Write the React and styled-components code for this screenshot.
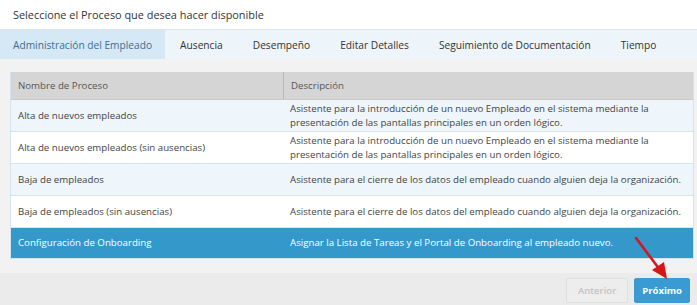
import React, { useState } from "react";
import styled, { createGlobalStyle } from "styled-components";

const GlobalStyle = createGlobalStyle`
  html, body { margin: 0; padding: 0; background: #fff; }
  body { font-family: "Open Sans", "Liberation Sans", sans-serif; color: #333; }
`;

const Page = styled.div`
  width: 697px;
  height: 305px;
  display: flex;
  flex-direction: column;
  position: relative;
  overflow: hidden;
`;

const Title = styled.div`
  height: 30px;
  padding-left: 13px;
  display: flex;
  align-items: center;
  font-size: 10.9px;
  color: #333;
  border-bottom: 1px solid #dde3e8;
`;

const Tabs = styled.div`
  height: 30px;
  display: flex;
  background: #eef5fa;
`;

const Tab = styled.div`
  padding: 0 15px;
  display: flex;
  align-items: center;
  font-size: 10.2px;
  color: ${(p) => (p.active ? "#3d6f8e" : "#333")};
  background: ${(p) => (p.active ? "#d5e8f5" : "transparent")};
  cursor: pointer;
  &:first-child { padding: 0 13px; }
`;

const Panel = styled.div`
  flex: 1;
  background: #f2f2f2;
  padding: 13px 3px 14px 10px;
`;

const Table = styled.div`
  border: 1px solid #d4e4ef;
  border-top: none;
  background: #fff;
`;

const Row = styled.div`
  display: grid;
  grid-template-columns: 272px 1fr;
  min-height: ${(p) => p.h || 31}px;
  background: ${(p) =>
    p.selected ? "#3498cb" : p.head ? "#d5d5d5" : p.alt ? "#eef6fb" : "#fff"};
  color: ${(p) => (p.selected ? "#fff" : p.head ? "#555" : "#444")};
  border-bottom: 1px solid ${(p) => (p.head ? "#c9c9c9" : "#d2e5f2")};
  &:last-child { border-bottom: none; }
`;

const Cell = styled.div`
  display: flex;
  align-items: center;
  padding: 0 8px 0 7px;
  font-size: 9.7px;
  line-height: 13.5px;
  border-left: ${(p) => (p.divide ? "1px solid #b9b9b9" : "none")};
`;

const Footer = styled.div`
  height: 33px;
  background: #ebebeb;
  display: flex;
  justify-content: flex-end;
  align-items: center;
  gap: 6px;
  padding: 0 7px 0 0;
`;

const Button = styled.button`
  height: 25px;
  padding: 0 ${(p) => (p.primary ? 7 : 11)}px;
  border-radius: 2px;
  font-family: "Open Sans", "Liberation Sans", sans-serif;
  font-size: 9.5px;
  font-weight: ${(p) => (p.primary ? 700 : 600)};
  border: 1px solid ${(p) => (p.primary ? "#3a9bd3" : "#e0e0e0")};
  background: ${(p) => (p.primary ? "#3a9bd3" : "#ededed")};
  color: ${(p) => (p.primary ? "#fff" : "#c2c2c2")};
  margin-top: 3px;
`;

const Arrow = styled.svg`
  position: absolute;
  left: 630px;
  top: 232px;
  pointer-events: none;
`;

const tabs = [
  "Administración del Empleado",
  "Ausencia",
  "Desempeño",
  "Editar Detalles",
  "Seguimiento de Documentación",
  "Tiempo",
];

const rows = [
  {
    name: "Alta de nuevos empleados",
    desc: "Asistente para la introducción de un nuevo Empleado en el sistema mediante la presentación de las pantallas principales en un orden lógico.",
  },
  {
    name: "Alta de nuevos empleados (sin ausencias)",
    desc: "Asistente para la introducción de un nuevo Empleado en el sistema mediante la presentación de las pantallas principales en un orden lógico.",
  },
  {
    name: "Baja de empleados",
    desc: "Asistente para el cierre de los datos del empleado cuando alguien deja la organización.",
  },
  {
    name: "Baja de empleados (sin ausencias)",
    desc: "Asistente para el cierre de los datos del empleado cuando alguien deja la organización.",
  },
  {
    name: "Configuración de Onboarding",
    desc: "Asignar la Lista de Tareas y el Portal de Onboarding al empleado nuevo.",
  },
];

export default function App() {
  const [active, setActive] = useState(0);
  const [selected, setSelected] = useState(4);

  return (
    <Page>
      <GlobalStyle />
      <Title>Seleccione el Proceso que desea hacer disponible</Title>
      <Tabs>
        {tabs.map((t, i) => (
          <Tab key={t} active={i === active} onClick={() => setActive(i)}>
            {t}
          </Tab>
        ))}
      </Tabs>
      <Panel>
        <Table>
          <Row head h={27}>
            <Cell>Nombre de Proceso</Cell>
            <Cell divide>Descripción</Cell>
          </Row>
          {rows.map((r, i) => (
            <Row
              key={r.name}
              alt={i % 2 === 0}
              selected={i === selected}
              h={i === 4 ? 30 : 31}
              onClick={() => setSelected(i)}
            >
              <Cell>{r.name}</Cell>
              <Cell>{r.desc}</Cell>
            </Row>
          ))}
        </Table>
      </Panel>
      <Footer>
        <Button disabled>Anterior</Button>
        <Button primary>Próximo</Button>
      </Footer>
      <Arrow width="50" height="52" viewBox="0 0 50 52">
        <line x1="6" y1="6" x2="30" y2="38" stroke="#d8141b" strokeWidth="2.5" strokeLinecap="round" />
        <polygon points="37,47 22,38 34,30" fill="#d8141b" />
      </Arrow>
    </Page>
  );
}
